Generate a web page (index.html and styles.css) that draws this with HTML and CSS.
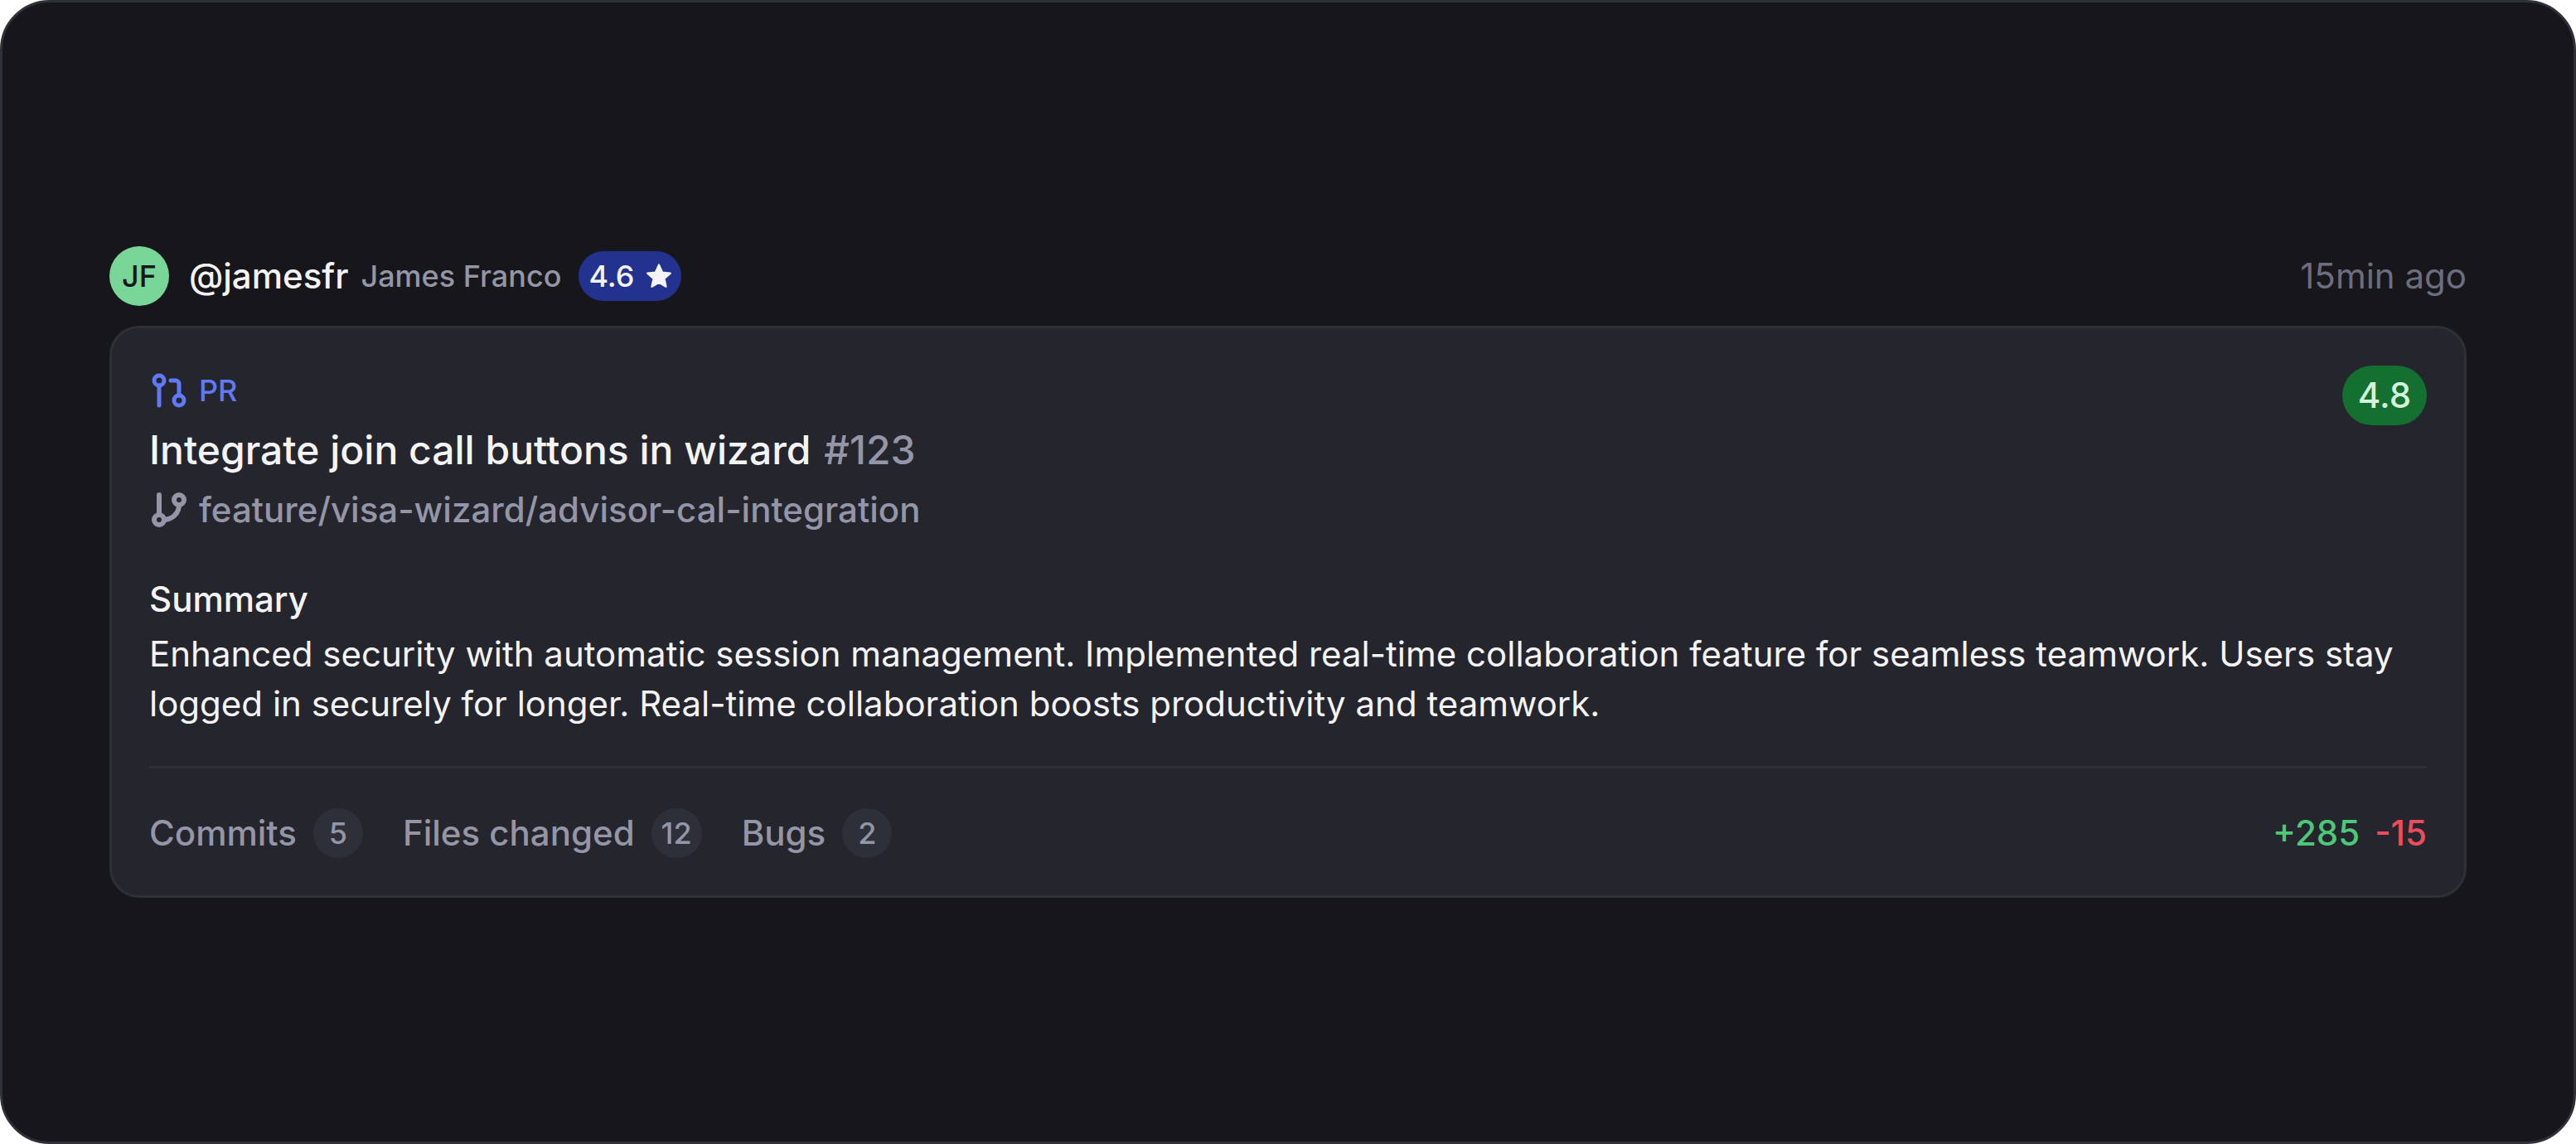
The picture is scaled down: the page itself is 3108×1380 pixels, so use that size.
FILE: index.html
```html
<!DOCTYPE html>
<html lang="en">
	<head>
		<meta charset="utf-8">
		<title>Pull request activity</title>
		<link rel="stylesheet" href="styles.css">
	</head>
	<body>
	<main class="panel">
		<article class="activity">
			<header class="author">
				<span class="avatar">JF</span>
				<span class="handle">@jamesfr</span>
				<span class="name">James Franco</span>
				<span class="rating">4.6
					<svg class="star" viewBox="0 0 24 24" aria-hidden="true"><path d="M12 3l2.7 6 6.5.7-4.9 4.4 1.4 6.4L12 17.2l-5.7 3.3 1.4-6.4-4.9-4.4 6.5-.7z"/></svg>
				</span>
				<time class="time">15min ago</time>
			</header>
			<section class="card">
				<div class="top">
					<div class="info">
						<div class="kind">
							<svg class="icon" viewBox="0 0 24 24" aria-hidden="true"><circle cx="6" cy="6" r="3"/><circle cx="18" cy="18" r="3"/><path d="M6 9v12M13 6h3a2 2 0 0 1 2 2v7"/></svg>
							PR
						</div>
						<h2 class="title">Integrate join call buttons in wizard <span class="number">#123</span></h2>
						<div class="branch">
							<svg class="icon bold" viewBox="0 0 24 24" aria-hidden="true"><circle cx="18" cy="6" r="3"/><circle cx="6" cy="18" r="3"/><path d="M6 3v12M18 9a9 9 0 0 1-9 9"/></svg>
							feature/visa-wizard/advisor-cal-integration
						</div>
					</div>
					<span class="score">4.8</span>
				</div>
				<div class="summary">
					<h3>Summary</h3>
					<p>Enhanced security with automatic session management. Implemented real-time collaboration feature for seamless teamwork. Users stay logged in securely for longer. Real-time collaboration boosts productivity and teamwork.</p>
				</div>
				<footer class="stats">
					<span class="stat">Commits <span class="count">5</span></span>
					<span class="stat">Files changed <span class="count">12</span></span>
					<span class="stat">Bugs <span class="count">2</span></span>
					<span class="diff"><span class="added">+285</span><span class="removed">-15</span></span>
				</footer>
			</section>
		</article>
	</main>
	</body>
</html>
```
FILE: styles.css
```css
*{box-sizing:border-box;}
body
{
	margin:0;
	background:#fff;
	color:#f4f4f6;
	font-family:Inter, "Liberation Sans", sans-serif;
	font-size:42px;
	line-height:60px;
}
h2, h3, p{margin:0;}
.panel
{
	min-height:100vh;
	display:flex;
	align-items:center;
	padding:0 129px;
	background:#17161b;
	border:3px solid #2e3138;
	border-radius:60px;
}
.activity{flex:1; display:flex; flex-direction:column; gap:24px;}

/* author row */
.author{display:flex; align-items:center;}
.avatar
{
	width:72px;
	height:72px;
	margin-right:24px;
	border-radius:50%;
	background:#79d699;
	color:#17161b;
	font-size:36px;
	font-weight:500;
	line-height:72px;
	text-align:center;
}
.handle{font-weight:500;}
.name{margin:0 21px 0 15px; color:#9496a8; font-size:36px; font-weight:500;}
.rating
{
	display:flex;
	align-items:center;
	gap:12px;
	height:60px;
	padding:0 9px 0 12px;
	border-radius:30px;
	background:#23318f;
	font-size:36px;
	font-weight:500;
}
.star{width:36px; height:36px; fill:#f4f4f6; stroke:#f4f4f6; stroke-width:1.5; stroke-linejoin:round;}
.time{margin-left:auto; color:#6c6e80;}

/* pull request card */
.card
{
	padding:45px;
	background:#25252d;
	border:3px solid #2e3037;
	border-radius:36px;
}
.top{display:flex; justify-content:space-between; align-items:flex-start;}
.info{display:flex; flex-direction:column; gap:6px;}
.kind, .branch{display:flex; align-items:center; gap:12px; font-weight:500;}
.kind{color:#6079f5; font-size:36px;}
.branch{color:#9496a8;}
.icon
{
	width:48px;
	height:48px;
	fill:none;
	stroke:currentColor;
	stroke-width:2.5;
	stroke-linecap:round;
	stroke-linejoin:round;
}
.bold{stroke-width:3;}
.title{font-size:48px; font-weight:500; line-height:72px;}
.number{margin-left:3px; color:#9496a8;}
.score
{
	min-width:102px;
	padding:6px 18px;
	border-radius:36px;
	background:#137031;
	color:#d3f3dd;
	font-weight:500;
	text-align:center;
}
.summary{margin:48px 0 45px;}
.summary h3{margin-bottom:6px; font-size:42px; font-weight:500;}

.stats
{
	display:flex;
	gap:48px;
	padding-top:48px;
	border-top:3px solid #2e3037;
	font-weight:500;
}
.stat{display:flex; gap:20px; color:#9496a8;}
.count
{
	min-width:60px;
	padding:0 12px;
	border-radius:30px;
	background:#2d3038;
	font-size:36px;
	text-align:center;
}
.diff{display:flex; gap:18px; margin-left:auto;}
.added{color:#4cc878;}
.removed{color:#ec4d5d;}
```
